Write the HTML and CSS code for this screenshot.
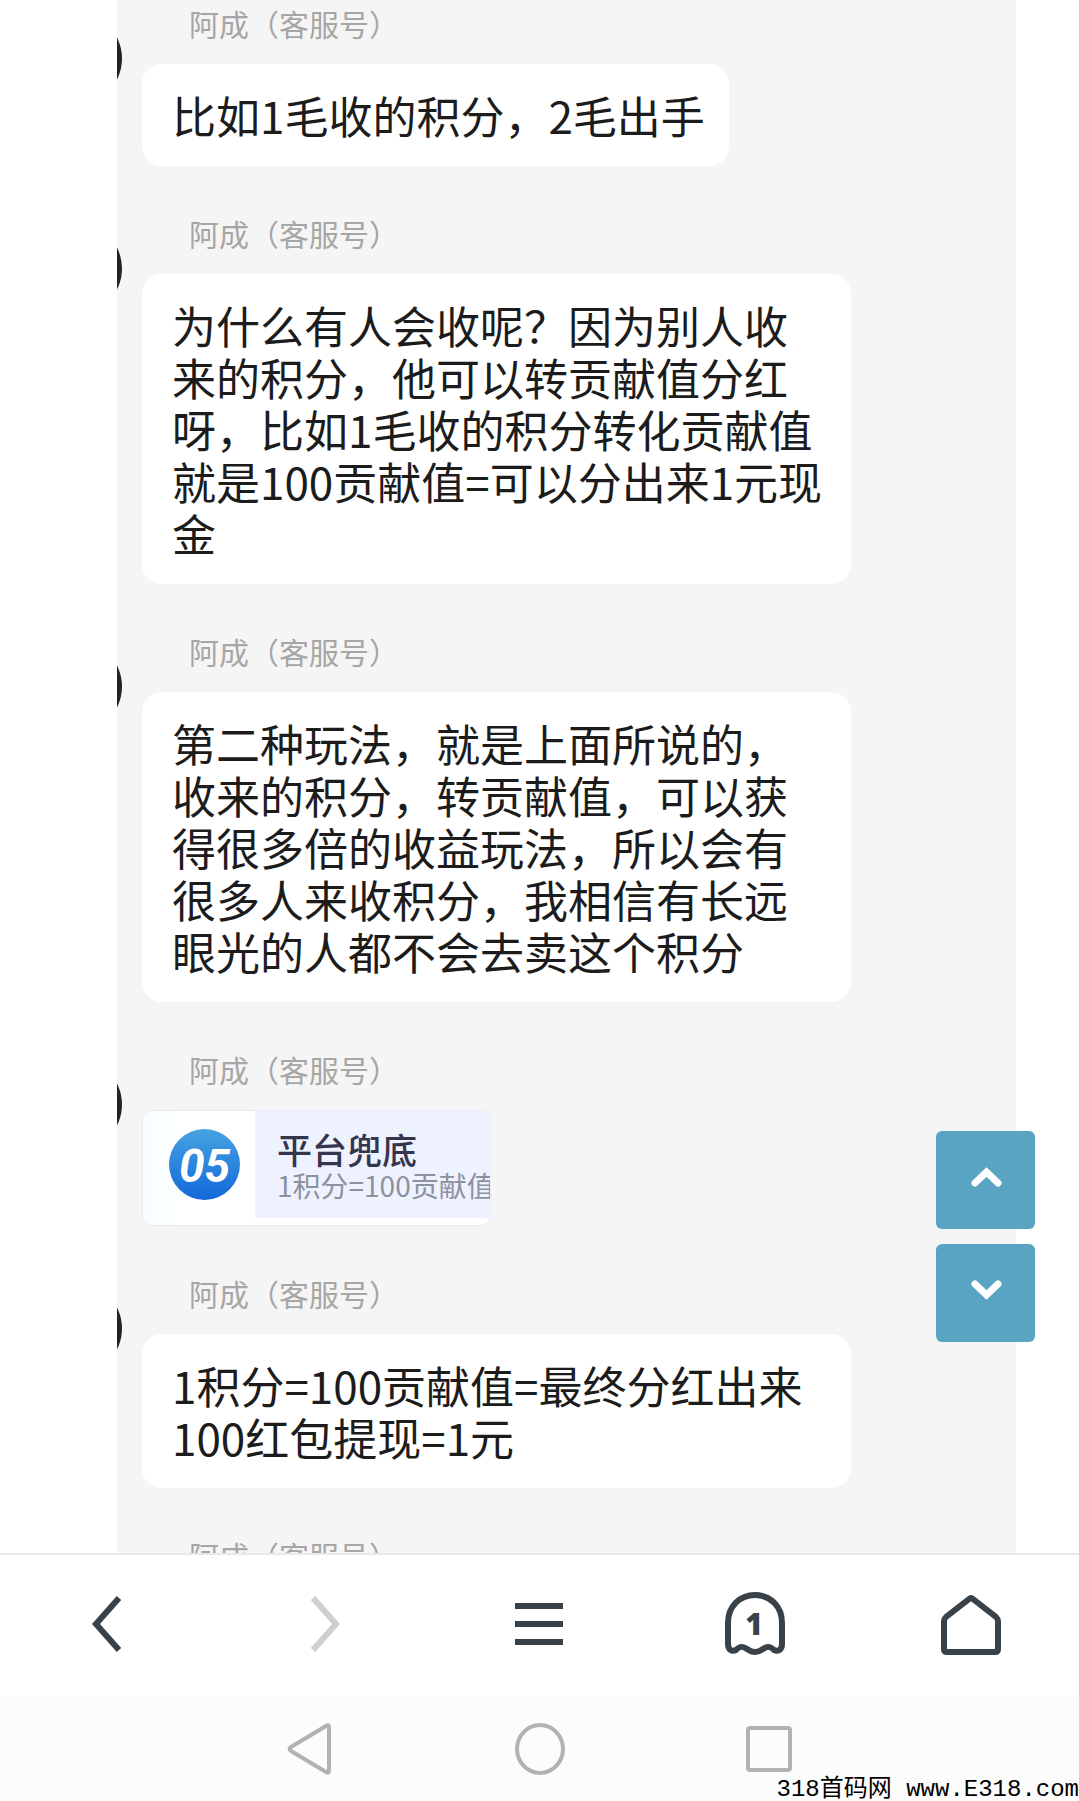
FILE: index.html
```html
<!DOCTYPE html>
<html lang="zh-CN">
<head>
    <meta charset="UTF-8">
    <meta name="viewport" content="width=device-width, initial-scale=1.0">
    <title>318首码网</title>
    <link rel="stylesheet" href="styles.css">
</head>
<body>

    <main class="page">
        <div class="chat">
            <div class="message">
                <div class="avatar"></div>
                <div class="content">
                    <p class="sender">阿成（客服号）</p>
                    <p class="bubble">比如1毛收的积分，2毛出手</p>
                </div>
            </div>

            <div class="message">
                <div class="avatar"></div>
                <div class="content">
                    <p class="sender">阿成（客服号）</p>
                    <p class="bubble">为什么有人会收呢？因为别人收来的积分，他可以转贡献值分红呀，比如1毛收的积分转化贡献值就是100贡献值=可以分出来1元现金</p>
                </div>
            </div>

            <div class="message">
                <div class="avatar"></div>
                <div class="content">
                    <p class="sender">阿成（客服号）</p>
                    <p class="bubble">第二种玩法，就是上面所说的，收来的积分，转贡献值，可以获得很多倍的收益玩法，所以会有很多人来收积分，我相信有长远眼光的人都不会去卖这个积分</p>
                </div>
            </div>

            <div class="message">
                <div class="avatar"></div>
                <div class="content">
                    <p class="sender">阿成（客服号）</p>
                    <div class="card">
                        <div class="cardNumber"><span>05</span></div>
                        <div class="cardText">
                            <h2>平台兜底</h2>
                            <p>1积分=100贡献值</p>
                        </div>
                    </div>
                </div>
            </div>

            <div class="message">
                <div class="avatar"></div>
                <div class="content">
                    <p class="sender">阿成（客服号）</p>
                    <p class="bubble">1积分=100贡献值=最终分红出来100红包提现=1元</p>
                </div>
            </div>

            <div class="message">
                <div class="avatar"></div>
                <div class="content">
                    <p class="sender">阿成（客服号）</p>
                </div>
            </div>
        </div>

        <!-- Page up / page down -->
        <div class="scrollButtons">
            <button type="button" aria-label="向上">
                <svg width="99" height="98" viewBox="0 0 99 98"><path d="M39 52 L50.500 41 L62 52"/></svg>
            </button>
            <button type="button" aria-label="向下">
                <svg width="99" height="98" viewBox="0 0 99 98"><path d="M39 40 L50.500 51 L62 40"/></svg>
            </button>
        </div>
    </main>

    <!-- Browser toolbar -->
    <nav class="toolbar">
        <button type="button" aria-label="后退">
            <svg width="64" height="64" viewBox="0 0 64 64"><path d="M43 6 L20 32 L43 58"/></svg>
        </button>
        <button type="button" class="disabled" aria-label="前进">
            <svg width="64" height="64" viewBox="0 0 64 64"><path d="M21 6 L44 32 L21 58"/></svg>
        </button>
        <button type="button" aria-label="菜单">
            <svg width="64" height="64" viewBox="0 0 64 64"><path d="M8 14 H56 M8 32 H56 M8 50 H56"/></svg>
        </button>
        <button type="button" aria-label="窗口">
            <svg width="64" height="64" viewBox="0 0 64 64">
                <path d="M5 52 V31 C5 14 17 3 32 3 C47 3 59 14 59 31 V52 C59 58 55 60 51 58 C47 54 44 54 40 57 C34 61 30 61 24 57 C20 54 17 54 13 58 C9 60 5 58 5 52 Z"/>
                <text x="31" y="43" text-anchor="middle">1</text>
            </svg>
        </button>
        <button type="button" aria-label="主页">
            <svg width="64" height="64" viewBox="0 0 64 64"><path d="M5 29 Q5 27 7 25 L30 7 Q32 5 34 7 L57 25 Q59 27 59 29 V57 Q59 60 56 60 H8 Q5 60 5 57 Z"/></svg>
        </button>
    </nav>

    <!-- System navigation -->
    <footer class="systemBar">
        <button type="button" aria-label="返回">
            <svg width="52" height="52" viewBox="0 0 52 52"><path d="M41 3 Q44 1 44 4 V48 Q44 51 41 49 L6 28 Q3 26 6 24 Z"/></svg>
        </button>
        <button type="button" aria-label="桌面">
            <svg width="52" height="52" viewBox="0 0 52 52"><ellipse cx="26" cy="26" rx="23" ry="24"/></svg>
        </button>
        <button type="button" aria-label="最近任务">
            <svg width="52" height="52" viewBox="0 0 52 52"><rect x="5" y="5" width="42" height="42" rx="2"/></svg>
        </button>
        <span class="watermark">318首码网 www.E318.com</span>
    </footer>

</body>
</html>
```
FILE: styles.css
```css
* {
    box-sizing: border-box;
}

body {
    font-family: "Noto Sans CJK SC", sans-serif;
    display: flex;
    flex-direction: column;
    height: 100vh;
    margin: 0;
    background-color: #ffffff;
}

p, h2 {
    margin: 0;
}

button {
    display: flex;
    justify-content: center;
    align-items: center;
    padding: 0;
    border: none;
    background: transparent;
    cursor: pointer;
}

svg {
    display: block;
    fill: none;
}

.page {
    position: relative;
    flex: 1;
    min-height: 0;
    display: flex;
    padding: 0 63px 0 117px;
}

/* Chat */
.chat {
    flex: 1;
    display: flex;
    flex-direction: column;
    gap: 48px;
    padding-top: 4px;
    background-color: #f5f5f5;
    overflow: hidden;
}

/* The avatars are cut off by the left edge of the chat */
.message {
    display: flex;
    flex-shrink: 0;
    align-items: flex-start;
    gap: 20px;
    margin-left: -88px;
}

.avatar {
    flex-shrink: 0;
    width: 93px;
    height: 93px;
    margin-top: 8px;
    border-radius: 50%;
    background-color: #222222;
}

.content {
    display: flex;
    flex-direction: column;
    align-items: flex-start;
    max-width: 709px;
}

.sender {
    margin: 0 0 22px 47px;
    font-size: 30px;
    line-height: 38px;
    color: #a6a6a6;
}

.bubble {
    padding: 25px 24px 25px 30px;
    border-radius: 20px;
    background-color: #ffffff;
    font-size: 44px;
    line-height: 52px;
    color: #1c1c1c;
}

.card {
    display: flex;
    width: 349px;
    height: 116px;
    border: 1px solid #eaedf8;
    border-radius: 10px;
    background: linear-gradient(to right, #f7fdff, #ffffff 40px);
    overflow: hidden;
}

.cardNumber {
    flex-shrink: 0;
    width: 112px;
    padding: 18px 0 0 26px;
}

.cardNumber span {
    display: block;
    width: 71px;
    height: 71px;
    border-radius: 50%;
    background: linear-gradient(#46a3e2, #1368d8);
    color: #ffffff;
    font-family: Roboto, sans-serif;
    font-size: 46px;
    font-style: italic;
    font-weight: 700;
    line-height: 74px;
    text-align: center;
}

.cardText {
    flex: 1;
    min-width: 0;
    height: 107px;
    padding: 18px 0 0 22px;
    background-color: #eef1fe;
    white-space: nowrap;
}

.cardText h2 {
    font-size: 35px;
    font-weight: 500;
    line-height: 40px;
    color: #35354d;
}

.cardText p {
    font-size: 28px;
    line-height: 32px;
    color: #8b929d;
}

/* Page up / page down */
.scrollButtons {
    position: absolute;
    right: 44px;
    bottom: 211px;
    display: flex;
    flex-direction: column;
    gap: 15px;
}

.scrollButtons button {
    border-radius: 6px;
    background-color: #59a4c2;
}

.scrollButtons svg {
    stroke: #ffffff;
    stroke-width: 7;
    stroke-linecap: round;
}

/* Browser toolbar */
.toolbar {
    display: grid;
    grid-template-columns: repeat(5, 1fr);
    height: 143px;
    padding-bottom: 3px;
    border-top: 2px solid #e9e9e9;
}

.toolbar svg {
    stroke: #384248;
    stroke-width: 6;
}

.toolbar .disabled svg {
    stroke: #cdcfd1;
}

.toolbar text {
    fill: #384248;
    stroke: none;
    font-family: "Open Sans", sans-serif;
    font-size: 30px;
    font-weight: 800;
}

/* System navigation */
.systemBar {
    position: relative;
    display: flex;
    justify-content: center;
    gap: 177px;
    height: 105px;
    background-color: #fcfcfc;
}

.systemBar svg {
    stroke: #b2b2b2;
    stroke-width: 4;
}

.watermark {
    position: absolute;
    right: 0;
    bottom: 0;
    font-family: "Liberation Mono", "Noto Sans CJK SC", monospace;
    font-size: 24px;
    line-height: 22px;
    color: #000000;
}
```
